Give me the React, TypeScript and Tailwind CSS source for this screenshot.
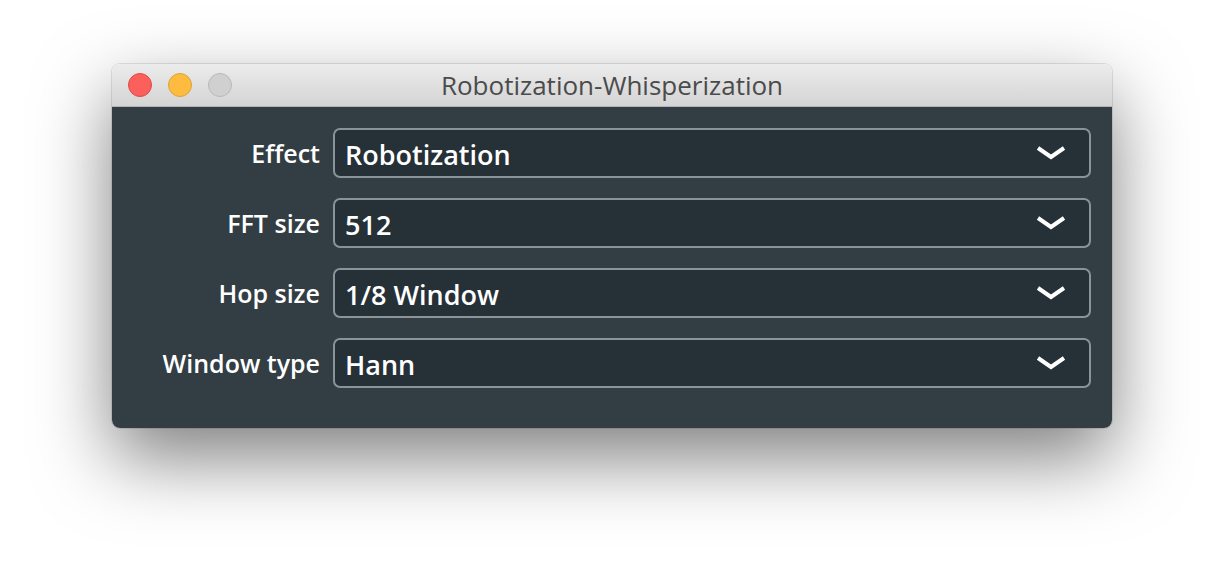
import React from 'react';

const rows = [
  { label: 'Effect', value: 'Robotization' },
  { label: 'FFT size', value: '512' },
  { label: 'Hop size', value: '1/8 Window' },
  { label: 'Window type', value: 'Hann' },
];

const Chevron = () => (
  <svg width="32" height="16" viewBox="0 0 32 16" className="shrink-0">
    <polyline points="3,3 16,12 29,3" fill="none" stroke="#ffffff" strokeWidth="4" strokeLinejoin="miter" />
  </svg>
);

const ComboBox = ({ value }: { value: string }) => (
  <div className="h-[50px] flex items-center justify-between rounded-[7px] border-2 border-[#899398] bg-[#263037] pl-[10px] pr-[22px]">
    <span className="pt-[3px] text-[27px] font-semibold text-white leading-none">{value}</span>
    <Chevron />
  </div>
);

const App = () => {
  return (
    <div className="w-full h-[588px] bg-white pt-[64px] pl-[112px] font-['Open_Sans',sans-serif]">
      <div className="w-[1000px] h-[364px] flex flex-col rounded-[8px] overflow-hidden shadow-[0_30px_75px_rgba(0,0,0,0.5)] ring-1 ring-black/10">
        {/* title bar */}
        <div className="h-[43px] flex items-center px-[16px] bg-gradient-to-b from-[#ececec] to-[#d4d4d4] border-b border-[#b4b4b4] relative">
          <div className="flex gap-[16px]">
            <span className="w-[24px] h-[24px] rounded-full bg-[#fc605c] border border-[#de4a45]" />
            <span className="w-[24px] h-[24px] rounded-full bg-[#fdbc40] border border-[#dea236]" />
            <span className="w-[24px] h-[24px] rounded-full bg-[#d0d0d0] border border-[#b9b9b9]" />
          </div>
          <div className="absolute inset-0 flex items-center justify-center pt-[1px] text-[26px] text-[#4b4b4b] pointer-events-none">
            Robotization-Whisperization
          </div>
        </div>
        {/* body */}
        <div className="flex-1 bg-[#323d44] pt-[21px] pl-[21px] pr-[21px]">
          <div className="grid grid-cols-[187px_1fr] gap-x-[13px] gap-y-[20px]">
            {rows.map((r) => (
              <React.Fragment key={r.label}>
                <div className="h-[50px] flex items-center justify-end pt-[1px] text-[25px] font-semibold text-white whitespace-nowrap">
                  {r.label}
                </div>
                <ComboBox value={r.value} />
              </React.Fragment>
            ))}
          </div>
        </div>
      </div>
    </div>
  );
};

export default App;
